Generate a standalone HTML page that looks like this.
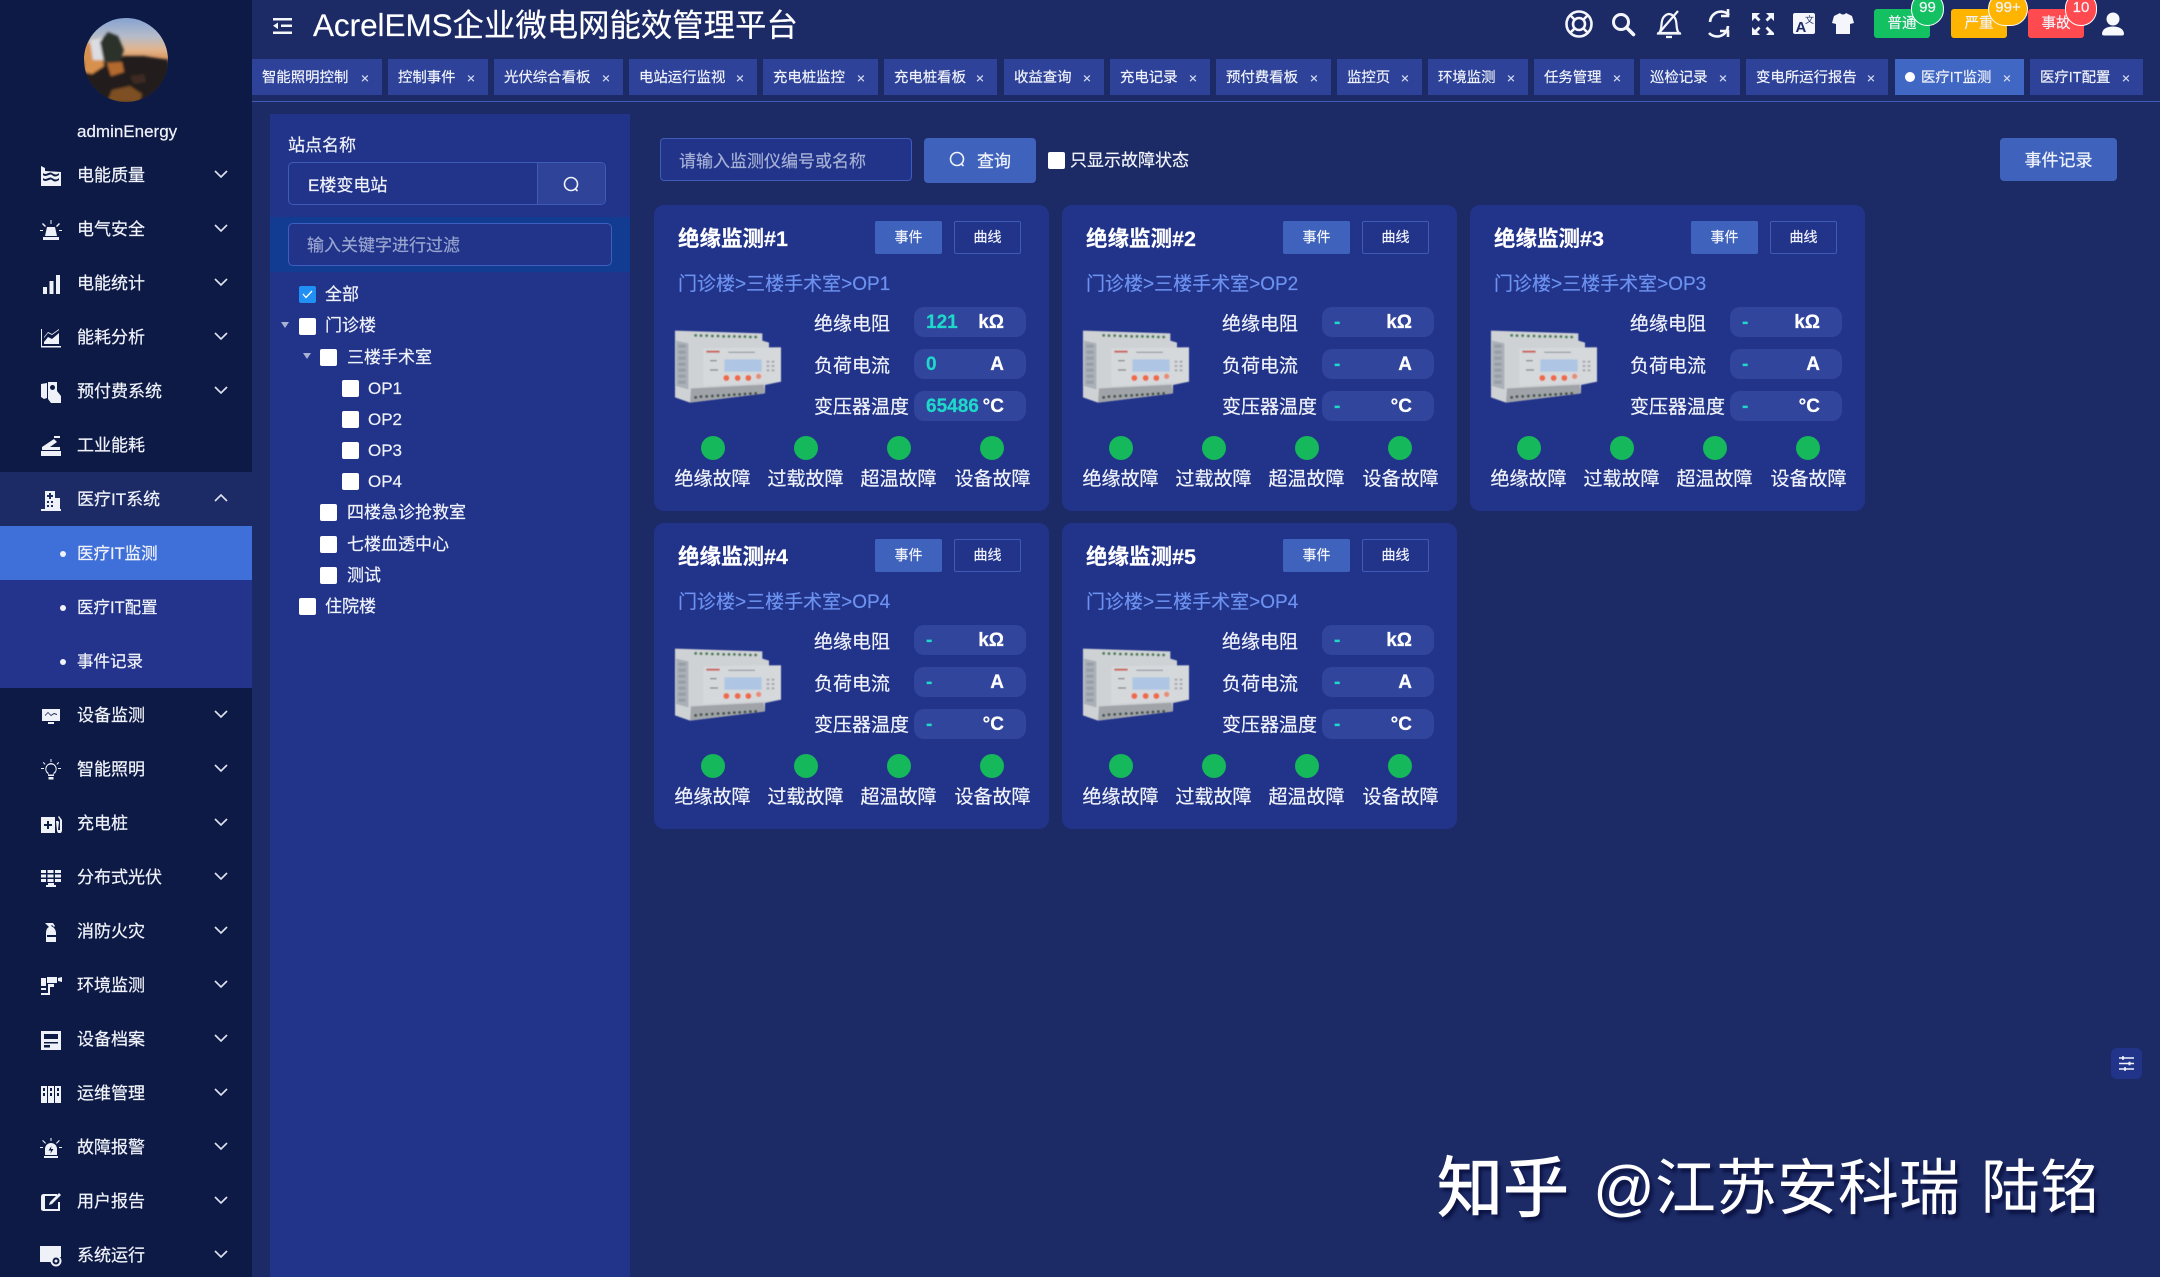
<!DOCTYPE html>
<html lang="zh"><head><meta charset="utf-8"><title>AcrelEMS</title>
<style>
*{box-sizing:border-box}
html,body{margin:0;padding:0;width:2160px;height:1277px;overflow:hidden}
body{position:relative;background:#1c2a66;color:#f0f3fa;font-family:"Liberation Sans","Noto Sans CJK SC",sans-serif;-webkit-text-stroke:.2px}
.a{position:absolute}
.t{position:absolute;line-height:26px;white-space:nowrap;margin-top:1px}
#side{left:0;top:0;width:252px;height:1277px;background:#0e1a46;overflow:hidden}
.row{position:absolute;left:0;width:252px;height:54px}
.row .l{position:absolute;left:77px;top:15px;line-height:26px;font-size:17px;white-space:nowrap}
.row svg.ic{position:absolute;left:40px;top:17px;width:22px;height:22px;fill:#eef1f7}
.row svg.ch{position:absolute;left:213px;top:21px;width:16px;height:10px;fill:none;stroke:#dfe4f0;stroke-width:1.6}
.sub .l{font-size:16.5px}
.sub::before{content:"";position:absolute;left:60px;top:25px;width:6px;height:6px;border-radius:50%;background:#f0f3fa}
.tab{position:absolute;top:59px;height:36px;background:#2e429a;font-size:14.4px;line-height:38px;padding-left:10px;white-space:nowrap}
.tab i{position:absolute;right:13px;top:0;font-style:normal;font-size:14px;color:#d5dbef}
.hb{position:absolute;top:9px;width:56px;height:29px;border-radius:3px;font-size:14.5px;line-height:30px;text-align:center}
.bd{position:absolute;top:-17px;height:34px;border-radius:17px;border:1px solid #fff;font-size:15px;line-height:30px;text-align:center}
.cb{position:absolute;width:17px;height:17px;background:#fff;border-radius:2px}
.tr{position:absolute;font-size:17px;line-height:26px;white-space:nowrap;margin-top:1px}
.ar{position:absolute;width:0;height:0;border-left:4.5px solid transparent;border-right:4.5px solid transparent;border-top:6px solid #a9b2d4}
.card{position:absolute;width:395px;height:306px;background:#22338a;border-radius:10px}
.card .tt{position:absolute;left:24px;top:21px;line-height:26px;font-size:21.5px;font-weight:700;white-space:nowrap;color:#fff}
.card .b1,.card .b2{position:absolute;top:16px;width:67px;height:33px;border-radius:2px;font-size:14px;line-height:32px;text-align:center}
.card .b1{left:221px;background:#3f63bd}
.card .b2{left:300px;border:1px solid #3f5bb5;line-height:31px}
.card .pa{position:absolute;left:24px;top:66px;line-height:27px;font-size:19px;color:#6c92f0;white-space:nowrap}
.card svg.dv{position:absolute;left:11px;top:105px;width:140px;height:110px}
.card .lb{position:absolute;left:160px;font-size:19px;line-height:26px;white-space:nowrap}
.card .pl{position:absolute;left:260px;width:112px;height:30px;background:#31459c;border-radius:10px;font-size:19px;font-weight:700;line-height:31px}
.pl b{position:absolute;left:12px;top:0;color:#1ed8c9}
.pl u{position:absolute;right:22px;top:0;text-decoration:none;color:#fff}
.card .d{position:absolute;top:231px;width:24px;height:24px;border-radius:50%;background:#15b85a}
.card .f{position:absolute;top:262px;width:93px;text-align:center;font-size:19px;line-height:26px;white-space:nowrap}
.wm{position:absolute;top:1148px;line-height:80px;white-space:nowrap;color:#fff;text-shadow:3px 4px 3px #0a1240;-webkit-text-stroke:0}
</style></head><body>
<svg width="0" height="0" style="position:absolute"><defs>
<filter id="bl" x="-5%" y="-5%" width="110%" height="110%"><feGaussianBlur stdDeviation="1.8"/></filter>
<filter id="bl2" x="-5%" y="-5%" width="110%" height="110%"><feGaussianBlur stdDeviation="1.4"/></filter>
<symbol id="dev" viewBox="0 0 420 330"><g filter="url(#bl)">
<polygon points="30,62 292,70 292,92 312,98 312,112 348,112 348,215 300,225 300,250 75,278 30,262" fill="#cfd2d4"/>
<polygon points="33,92 70,100 70,238 33,228" fill="#aab0b7"/>
<g fill="#8e969e" opacity=".7"><rect x="40" y="104" width="22" height="9"/><rect x="40" y="122" width="22" height="9"/><rect x="40" y="140" width="22" height="9"/><rect x="40" y="158" width="22" height="9"/><rect x="40" y="176" width="22" height="9"/><rect x="40" y="194" width="22" height="9"/><rect x="40" y="212" width="22" height="9"/></g>
<polygon points="115,115 348,112 348,215 115,228" fill="#d6d9dc"/>
<polygon points="78,235 296,224 300,250 75,278" fill="#a0a4a9"/>
<g fill="#4a7d58"><circle cx="92" cy="76" r="4.500"/><circle cx="108" cy="77" r="4.500"/><circle cx="125" cy="77" r="4.500"/><circle cx="142" cy="78" r="4.500"/><circle cx="159" cy="78" r="4.500"/><circle cx="176" cy="79" r="4.500"/><circle cx="192" cy="79" r="4.500"/><circle cx="208" cy="79" r="4.500"/><circle cx="224" cy="80" r="4.500"/><circle cx="240" cy="80" r="4.500"/><circle cx="256" cy="81" r="4.500"/><circle cx="272" cy="81" r="4.500"/></g>
<g fill="#46544e"><circle cx="92" cy="262" r="4.500"/><circle cx="108" cy="260" r="4.500"/><circle cx="125" cy="259" r="4.500"/><circle cx="142" cy="258" r="4.500"/><circle cx="159" cy="257" r="4.500"/><circle cx="176" cy="256" r="4.500"/><circle cx="192" cy="255" r="4.500"/><circle cx="208" cy="254" r="4.500"/><circle cx="224" cy="253" r="4.500"/><circle cx="240" cy="252" r="4.500"/><circle cx="256" cy="251" r="4.500"/><circle cx="272" cy="250" r="4.500"/></g>
<rect x="124" y="122" width="40" height="6" fill="#c8625c"/>
<rect x="178" y="148" width="112" height="37" fill="#aec6e4"/>
<rect x="190" y="125" width="80" height="4" fill="#9a9fa5"/>
<rect x="135" y="150" width="20" height="4" fill="#888"/><rect x="135" y="178" width="24" height="4" fill="#888"/>
<g fill="#a3a6a9"><rect x="305" y="152" width="8" height="6"/><rect x="320" y="152" width="8" height="6"/><rect x="305" y="165" width="8" height="6"/><rect x="320" y="165" width="8" height="6"/><rect x="305" y="178" width="8" height="6"/><rect x="320" y="178" width="8" height="6"/></g>
<g fill="#ee6a4a"><circle cx="184" cy="204" r="9"/><circle cx="218" cy="204" r="9"/><circle cx="250" cy="204" r="9"/></g><circle cx="281" cy="199" r="8" fill="#e88d7a"/>
</g></symbol>
</defs></svg>

<div id="side" class="a">
<svg class="a" style="left:84px;top:18px" width="84" height="84" viewBox="0 0 84 84"><defs><clipPath id="av"><circle cx="42" cy="42" r="42"/></clipPath><linearGradient id="sk" x1="0" y1="0" x2="0" y2="1"><stop offset="0" stop-color="#86a2d2"/><stop offset=".22" stop-color="#b6bcc9"/><stop offset=".38" stop-color="#e2b48c"/><stop offset=".47" stop-color="#d99a66"/><stop offset=".55" stop-color="#3c3230"/></linearGradient></defs>
<g clip-path="url(#av)"><rect width="84" height="84" fill="url(#sk)"/>
<g filter="url(#bl2)">
<path d="M26 44 L40 38 L60 38 L84 42 V84 H0 V50Z" fill="#211d1c"/>
<path d="M0 25 L16 26 L20 48 L8 56 L0 54Z" fill="#d8904e"/>
<path d="M6 22 L18 20 L20 42 L9 42Z" fill="#dcdde2"/>
<path d="M16 24 L24 14 L34 18 L40 32 L36 44 L20 44Z" fill="#2a322b"/>
<path d="M23 45 L38 44 L40 54 L27 58Z" fill="#b46a2e"/>
<path d="M23 84 L28 72 L46 68 L58 76 L56 84Z" fill="#7d4f24"/>
<path d="M46 58 L60 56 L62 64 L50 66Z" fill="#3d2c20"/>
</g></g></svg>
<div class="t" style="left:77px;top:118px;font-size:17px">adminEnergy</div>

<div class="row" style="top:148px"><svg class="ic" viewBox="0 0 22 22"><path d="M1 1l4 2v3l16 1v14H1z M3 8c3 3 6-2 9 0s5 2 7 0v2c-3 2-5 2-7 0s-6 3-9 0z M3 13c3 3 6-2 9 0s5 2 7 0v2c-3 2-5 2-7 0s-6 3-9 0z" fill-rule="evenodd"/></svg><span class="l">电能质量</span><svg class="ch" viewBox="0 0 16 10"><path d="M2 2l6 6 6-6"/></svg></div>
<div class="row" style="top:202px"><svg class="ic" viewBox="0 0 22 22"><path d="M7 8h8l2 9H5z M3 18h16v3H3z M10.500 1h1v4h-1z M3 4l3 3-1 1-3-3z M19 4l1 1-3 3-1-1z M0 11h3v1H0z M19 11h3v1h-3z"/></svg><span class="l">电气安全</span><svg class="ch" viewBox="0 0 16 10"><path d="M2 2l6 6 6-6"/></svg></div>
<div class="row" style="top:256px"><svg class="ic" viewBox="0 0 22 22"><path d="M3 14h4v7H3z M9.500 8h4v13h-4z M16 2h4v19h-4z"/></svg><span class="l">电能统计</span><svg class="ch" viewBox="0 0 16 10"><path d="M2 2l6 6 6-6"/></svg></div>
<div class="row" style="top:310px"><svg class="ic" viewBox="0 0 22 22"><path d="M1 2h1v17h19v1.500H1z M4 15l4-5 4 2 7-6v11H4z M4 10l4-5 4 2 7-5v1l-7 5-4-2-4 5z"/></svg><span class="l">能耗分析</span><svg class="ch" viewBox="0 0 16 10"><path d="M2 2l6 6 6-6"/></svg></div>
<div class="row" style="top:364px"><svg class="ic" viewBox="0 0 22 22"><path d="M1 3l6-1v15l-3 1-3-2z M8 1h9v9l4 5v7H11l-3-4z M12.500 4a2.500 2.500 0 100 5 2.500 2.500 0 000-5z" fill-rule="evenodd"/></svg><span class="l">预付费系统</span><svg class="ch" viewBox="0 0 16 10"><path d="M2 2l6 6 6-6"/></svg></div>
<div class="row" style="top:418px"><svg class="ic" viewBox="0 0 22 22"><path d="M2 12L14 4l3 3-7 5h10v3H2z M1 16h20v5H1z M14 1h6v2h-6z"/></svg><span class="l">工业能耗</span></div>
<div class="row" style="top:472px;background:#1c2a66"><svg class="ic" viewBox="0 0 22 22"><path d="M5 2h10v7h5v11h1v2H1v-2h4z M9 4v2H7v2h2v2h2V8h2V6h-2V4z M7 12v2h2v-2z M11 12v2h2v-2z M7 16v2h2v-2z M11 16v2h2v-2z" fill-rule="evenodd"/></svg><span class="l">医疗IT系统</span><svg class="ch" viewBox="0 0 16 10"><path d="M2 8l6-6 6 6"/></svg></div>
<div class="a" style="left:0;top:526px;width:252px;height:162px;background:#24348c"></div>
<div class="row sub" style="top:526px;background:#3f6fd8"><span class="l">医疗IT监测</span></div>
<div class="row sub" style="top:580px"><span class="l">医疗IT配置</span></div>
<div class="row sub" style="top:634px"><span class="l">事件记录</span></div>
<div class="row" style="top:688px"><svg class="ic" viewBox="0 0 22 22"><path d="M2 4h18v12H2z M5 11l3-3 3 3 3-2 3 1v-1l-3-1-3 2-3-3-3 3z M8 17h6v2H8z" fill-rule="evenodd"/></svg><span class="l">设备监测</span><svg class="ch" viewBox="0 0 16 10"><path d="M2 2l6 6 6-6"/></svg></div>
<div class="row" style="top:742px"><svg class="ic" viewBox="0 0 22 22"><path d="M11 4a6 6 0 00-3 11v2h6v-2a6 6 0 00-3-11zm0 1.500a4.500 4.500 0 012.500 8.300v1.700h-5v-1.700A4.500 4.500 0 0111 5.500z M8.500 18h5v2.500h-5z M10.500 0h1v3h-1z M1 9h3v1H1z M18 9h3v1h-3z M3.500 3l2 2-.7.7-2-2z M18.500 3l.7.7-2 2-.7-.7z"/></svg><span class="l">智能照明</span><svg class="ch" viewBox="0 0 16 10"><path d="M2 2l6 6 6-6"/></svg></div>
<div class="row" style="top:796px"><svg class="ic" viewBox="0 0 22 22"><path d="M1 4h14v16H1z M7 8v3H4v2h3v3h2v-3h3v-2H9V8z M16 8h2l1 1-1 8h2V7l-2-3 1-1 3 4v11l-1 2h-3l-1-2z" fill-rule="evenodd"/></svg><span class="l">充电桩</span><svg class="ch" viewBox="0 0 16 10"><path d="M2 2l6 6 6-6"/></svg></div>
<div class="row" style="top:850px"><svg class="ic" viewBox="0 0 22 22"><path d="M1 3h5v3H1z M7.500 3h6v3h-6z M15 3h6v3h-6z M1 7.500h5v3H1z M7.500 7.500h6v3h-6z M15 7.500h6v3h-6z M1 12h5v3H1z M7.500 12h6v3h-6z M15 12h6v3h-6z M8 16h6v2h2v2H6v-2h2z"/></svg><span class="l">分布式光伏</span><svg class="ch" viewBox="0 0 16 10"><path d="M2 2l6 6 6-6"/></svg></div>
<div class="row" style="top:904px"><svg class="ic" viewBox="0 0 22 22"><path d="M5 2h8l2 3-1 1-2-2-1 1c3 1 5 4 5 7v9H6v-9c0-3 1-5 3-6z M7 14h9v2H7z" fill-rule="evenodd"/></svg><span class="l">消防火灾</span><svg class="ch" viewBox="0 0 16 10"><path d="M2 2l6 6 6-6"/></svg></div>
<div class="row" style="top:958px"><svg class="ic" viewBox="0 0 22 22"><path d="M1 3h5v8H1z M7 2h10v6H7z M18 3l4-1v5l-4-1z M8 9h6v3H10v8H8z M1 13h5v2H1z M1 18h7v2H1z"/></svg><span class="l">环境监测</span><svg class="ch" viewBox="0 0 16 10"><path d="M2 2l6 6 6-6"/></svg></div>
<div class="row" style="top:1012px"><svg class="ic" viewBox="0 0 22 22"><path d="M1 2h20v19H1z M4 5v5h14V5z M4 13v1.500h14V13z M4 16v2.500h6V16z" fill-rule="evenodd"/></svg><span class="l">设备档案</span><svg class="ch" viewBox="0 0 16 10"><path d="M2 2l6 6 6-6"/></svg></div>
<div class="row" style="top:1066px"><svg class="ic" viewBox="0 0 22 22"><path d="M1 3h6v17H1z M8 3h6v17H8z M15 3h6v17h-6z M3 5v3h2V5z M3 10v3h2v-3z M10 5v3h2V5z M10 10v3h2v-3z M17 5v3h2V5z M17 10v3h2v-3z" fill-rule="evenodd"/></svg><span class="l">运维管理</span><svg class="ch" viewBox="0 0 16 10"><path d="M2 2l6 6 6-6"/></svg></div>
<div class="row" style="top:1120px"><svg class="ic" viewBox="0 0 22 22"><path d="M11 6a6 6 0 00-6 6v6h12v-6a6 6 0 00-6-6z M4 19h14v2H4z M10.500 1h1v3h-1z M3 3l3 3-.8.8-3-3z M19 3l.8.8-3 3L16 6z M0 10h3v1H0z M19 10h3v1h-3z"/><path d="M11.500 9l-3 4.500H11l-.5 3 3-4.500H11z" fill="#0e1a46"/></svg><span class="l">故障报警</span><svg class="ch" viewBox="0 0 16 10"><path d="M2 2l6 6 6-6"/></svg></div>
<div class="row" style="top:1174px"><svg class="ic" viewBox="0 0 22 22"><path d="M4 3h13v2H5v13h13v-7h2v9H4c-2 0-3-1-3-2V6c0-2 1-3 3-3z M19 2l2 2-9 9-3 1 1-3z"/></svg><span class="l">用户报告</span><svg class="ch" viewBox="0 0 16 10"><path d="M2 2l6 6 6-6"/></svg></div>
<div class="row" style="top:1228px;height:49px"><svg class="ic" viewBox="0 0 22 22"><path d="M0 1h21v11h-7l-2 5H0z"/><circle cx="16" cy="16" r="4.500" fill="none" stroke="#eef1f7" stroke-width="2"/><circle cx="16" cy="16" r="1.500"/></svg><span class="l">系统运行</span><svg class="ch" viewBox="0 0 16 10"><path d="M2 2l6 6 6-6"/></svg></div>
</div>

<svg class="a" style="left:272px;top:17px" width="21" height="18" viewBox="0 0 21 18" fill="#f4f6fb"><path d="M1 1h19v2.500H1z M9 7.500h11v2.500H9z M1 14.500h19V17H1z M1 8.800L6 5.500v6.600z"/></svg>
<div class="t" style="left:313px;top:10px;font-size:31.400px;line-height:30px;color:#fff">AcrelEMS企业微电网能效管理平台</div>

<svg class="a" style="left:1560px;top:0" width="300" height="50" viewBox="0 0 300 50" fill="none" stroke="#f4f6fb">
<g stroke-width="2.600"><circle cx="19" cy="24" r="12.500"/><circle cx="19" cy="24" r="6"/><path d="M10.500 15.500l4.500 4.500M27.500 15.500L23 20M10.500 32.500L15 28M27.500 32.500L23 28"/></g>
<circle cx="61" cy="22" r="7.500" stroke-width="3"/><path d="M66.500 27.500l7 7" stroke-width="3.600" stroke-linecap="round"/>
<path d="M99 33c3-3 2-8 3-12 1-5 5-7 7-7s6 2 7 7c1 4 0 9 3 12zM97 33.500h24" stroke-width="2.200"/><path d="M118 11L99 33M106 37h6" stroke-width="2.200"/>
<path d="M150 22a11 11 0 0 1 19-7M168 9v7h-7M168 26a11 11 0 0 1-19 7" stroke-width="2.600"/><path d="M161 28h8v6" stroke-width="2.600" transform="translate(-1 3)"/>
<g fill="#f4f6fb" stroke="none"><path d="M192 13h8l-3 3 3.500 3.500-2 2L195 18l-3 3z M214 13h-8l3 3-3.500 3.500 2 2L211 18l3 3z M192 35h8l-3-3 3.500-3.500-2-2L195 30l-3-3z M214 35h-8l3-3-3.500-3.500 2-2L211 30l3 3z"/>
<rect x="233" y="13" width="22" height="21" rx="2"/>
<path d="M274 16l6-3c1 2 5 2 6 0l6 3 2 7-4 1v10h-14V24l-4-1z"/></g>
<text x="235.500" y="32" font-size="15" font-weight="700" fill="#1c2a66" stroke="none" font-family="Liberation Sans">A</text>
<text x="245" y="23" font-size="9" fill="#1c2a66" stroke="none" font-family="Noto Sans CJK SC">文</text>
</svg>

<div class="hb" style="left:1874px;background:#14c162">普通<span class="bd" style="left:37px;width:33px;background:#14c162">99</span></div>
<div class="hb" style="left:1951px;background:#ffb400">严重<span class="bd" style="left:37px;width:40px;background:#ffb400">99+</span></div>
<div class="hb" style="left:2028px;background:#ff4a4f">事故<span class="bd" style="left:37px;width:32px;background:#ff4a4f">10</span></div>
<svg class="a" style="left:2101px;top:12px" width="24" height="24" viewBox="0 0 24 24" fill="#f6f8fc"><circle cx="12" cy="7" r="6.500"/><path d="M1 22c0-5 5-7.500 11-7.500S23 17 23 22c0 1-1 1.500-2 1.500H3c-1 0-2-.5-2-1.500z"/></svg>

<div class="tab" style="left:252px;width:130px">智能照明控制<i>×</i></div>
<div class="tab" style="left:388px;width:100px">控制事件<i>×</i></div>
<div class="tab" style="left:494px;width:129px">光伏综合看板<i>×</i></div>
<div class="tab" style="left:629px;width:128px">电站运行监视<i>×</i></div>
<div class="tab" style="left:763px;width:115px">充电桩监控<i>×</i></div>
<div class="tab" style="left:884px;width:113px">充电桩看板<i>×</i></div>
<div class="tab" style="left:1004px;width:100px">收益查询<i>×</i></div>
<div class="tab" style="left:1110px;width:100px">充电记录<i>×</i></div>
<div class="tab" style="left:1216px;width:115px">预付费看板<i>×</i></div>
<div class="tab" style="left:1337px;width:85px">监控页<i>×</i></div>
<div class="tab" style="left:1428px;width:100px">环境监测<i>×</i></div>
<div class="tab" style="left:1534px;width:100px">任务管理<i>×</i></div>
<div class="tab" style="left:1640px;width:100px">巡检记录<i>×</i></div>
<div class="tab" style="left:1746px;width:142px">变电所运行报告<i>×</i></div>
<div class="tab" style="left:1895px;width:129px;background:#4167c4;padding-left:26px"><span class="a" style="left:10px;top:13px;width:10px;height:10px;border-radius:50%;background:#fff"></span>医疗IT监测<i>×</i></div>
<div class="tab" style="left:2030px;width:113px">医疗IT配置<i>×</i></div>
<div class="a" style="left:252px;top:101px;width:1908px;height:1px;background:#3f5cb8"></div>

<div class="a" style="left:270px;top:114px;width:360px;height:1163px;background:#22338a"></div>
<div class="t" style="left:288px;top:132px;font-size:17px">站点名称</div>
<div class="a" style="left:288px;top:162px;width:318px;height:43px;border:1px solid #3f5cb8;border-radius:5px;overflow:hidden"><div class="a" style="left:248px;top:0;width:70px;height:43px;background:#2f4399;border-left:1px solid #3f5cb8"></div></div>
<div class="t" style="left:308px;top:172px;font-size:17px">E楼变电站</div>
<svg class="a" style="left:562px;top:175px" width="19" height="19" viewBox="0 0 19 19" fill="none" stroke="#f0f3fa" stroke-width="1.600"><circle cx="9" cy="9" r="6.500"/><path d="M13.500 14l2 2"/></svg>
<div class="a" style="left:270px;top:217px;width:360px;height:55px;background:#123c92"></div>
<div class="a" style="left:288px;top:223px;width:324px;height:43px;border:1px solid #3f5fc0;border-radius:5px;background:#22338a"></div>
<div class="t" style="left:307px;top:232px;font-size:17px;color:#98a5d0">输入关键字进行过滤</div>

<div class="cb" style="left:299px;top:286px;background:#2090f5"><svg class="a" style="left:3px;top:4px" width="11" height="9" viewBox="0 0 11 9" fill="none" stroke="#fff" stroke-width="1.300"><path d="M1 4l3 3.500L10 1"/></svg></div><div class="tr" style="left:325px;top:281px">全部</div>
<div class="ar" style="left:281px;top:322px"></div><div class="cb" style="left:299px;top:318px"></div><div class="tr" style="left:325px;top:312px">门诊楼</div>
<div class="ar" style="left:303px;top:353px"></div><div class="cb" style="left:320px;top:349px"></div><div class="tr" style="left:347px;top:344px">三楼手术室</div>
<div class="cb" style="left:342px;top:380px"></div><div class="tr" style="left:368px;top:375px">OP1</div>
<div class="cb" style="left:342px;top:411px"></div><div class="tr" style="left:368px;top:406px">OP2</div>
<div class="cb" style="left:342px;top:442px"></div><div class="tr" style="left:368px;top:437px">OP3</div>
<div class="cb" style="left:342px;top:473px"></div><div class="tr" style="left:368px;top:468px">OP4</div>
<div class="cb" style="left:320px;top:504px"></div><div class="tr" style="left:347px;top:499px">四楼急诊抢救室</div>
<div class="cb" style="left:320px;top:536px"></div><div class="tr" style="left:347px;top:531px">七楼血透中心</div>
<div class="cb" style="left:320px;top:567px"></div><div class="tr" style="left:347px;top:562px">测试</div>
<div class="cb" style="left:299px;top:598px"></div><div class="tr" style="left:325px;top:593px">住院楼</div>

<div class="a" style="left:660px;top:138px;width:252px;height:43px;background:#22338a;border:1px solid #3f5cb8;border-radius:4px"></div>
<div class="t" style="left:679px;top:148px;font-size:17px;color:#a5b0d6">请输入监测仪编号或名称</div>
<div class="a" style="left:924px;top:138px;width:112px;height:45px;background:#3f63bd;border-radius:4px"></div>
<svg class="a" style="left:948px;top:150px" width="19" height="19" viewBox="0 0 19 19" fill="none" stroke="#f0f3fa" stroke-width="1.600"><circle cx="9" cy="9" r="6.500"/><path d="M13.500 14l2 2"/></svg>
<div class="t" style="left:977px;top:148px;font-size:17px">查询</div>
<div class="cb" style="left:1048px;top:152px"></div>
<div class="t" style="left:1070px;top:147px;font-size:17px">只显示故障状态</div>
<div class="a" style="left:2000px;top:138px;width:117px;height:43px;background:#3f63bd;border-radius:4px;font-size:17px;line-height:45px;text-align:center">事件记录</div>

<div class="card" style="left:654px;top:205px">
<div class="tt">绝缘监测#1</div><div class="b1">事件</div><div class="b2">曲线</div><div class="pa">门诊楼&gt;三楼手术室&gt;OP1</div>
<svg class="dv" viewBox="0 0 420 330"><use href="#dev" width="420" height="330"/></svg>
<div class="lb" style="top:107px">绝缘电阻</div><div class="lb" style="top:149px">负荷电流</div><div class="lb" style="top:190px">变压器温度</div>
<div class="pl" style="top:102px"><b>121</b><u>kΩ</u></div><div class="pl" style="top:144px"><b>0</b><u>A</u></div><div class="pl" style="top:186px"><b>65486</b><u>°C</u></div>
<div class="d" style="left:47px"></div><div class="d" style="left:140px"></div><div class="d" style="left:233px"></div><div class="d" style="left:326px"></div>
<div class="f" style="left:12px">绝缘故障</div><div class="f" style="left:105px">过载故障</div><div class="f" style="left:198px">超温故障</div><div class="f" style="left:292px">设备故障</div>
</div>
<div class="card" style="left:1062px;top:205px">
<div class="tt">绝缘监测#2</div><div class="b1">事件</div><div class="b2">曲线</div><div class="pa">门诊楼&gt;三楼手术室&gt;OP2</div>
<svg class="dv" viewBox="0 0 420 330"><use href="#dev" width="420" height="330"/></svg>
<div class="lb" style="top:107px">绝缘电阻</div><div class="lb" style="top:149px">负荷电流</div><div class="lb" style="top:190px">变压器温度</div>
<div class="pl" style="top:102px"><b>-</b><u>kΩ</u></div><div class="pl" style="top:144px"><b>-</b><u>A</u></div><div class="pl" style="top:186px"><b>-</b><u>°C</u></div>
<div class="d" style="left:47px"></div><div class="d" style="left:140px"></div><div class="d" style="left:233px"></div><div class="d" style="left:326px"></div>
<div class="f" style="left:12px">绝缘故障</div><div class="f" style="left:105px">过载故障</div><div class="f" style="left:198px">超温故障</div><div class="f" style="left:292px">设备故障</div>
</div>
<div class="card" style="left:1470px;top:205px">
<div class="tt">绝缘监测#3</div><div class="b1">事件</div><div class="b2">曲线</div><div class="pa">门诊楼&gt;三楼手术室&gt;OP3</div>
<svg class="dv" viewBox="0 0 420 330"><use href="#dev" width="420" height="330"/></svg>
<div class="lb" style="top:107px">绝缘电阻</div><div class="lb" style="top:149px">负荷电流</div><div class="lb" style="top:190px">变压器温度</div>
<div class="pl" style="top:102px"><b>-</b><u>kΩ</u></div><div class="pl" style="top:144px"><b>-</b><u>A</u></div><div class="pl" style="top:186px"><b>-</b><u>°C</u></div>
<div class="d" style="left:47px"></div><div class="d" style="left:140px"></div><div class="d" style="left:233px"></div><div class="d" style="left:326px"></div>
<div class="f" style="left:12px">绝缘故障</div><div class="f" style="left:105px">过载故障</div><div class="f" style="left:198px">超温故障</div><div class="f" style="left:292px">设备故障</div>
</div>
<div class="card" style="left:654px;top:523px">
<div class="tt">绝缘监测#4</div><div class="b1">事件</div><div class="b2">曲线</div><div class="pa">门诊楼&gt;三楼手术室&gt;OP4</div>
<svg class="dv" viewBox="0 0 420 330"><use href="#dev" width="420" height="330"/></svg>
<div class="lb" style="top:107px">绝缘电阻</div><div class="lb" style="top:149px">负荷电流</div><div class="lb" style="top:190px">变压器温度</div>
<div class="pl" style="top:102px"><b>-</b><u>kΩ</u></div><div class="pl" style="top:144px"><b>-</b><u>A</u></div><div class="pl" style="top:186px"><b>-</b><u>°C</u></div>
<div class="d" style="left:47px"></div><div class="d" style="left:140px"></div><div class="d" style="left:233px"></div><div class="d" style="left:326px"></div>
<div class="f" style="left:12px">绝缘故障</div><div class="f" style="left:105px">过载故障</div><div class="f" style="left:198px">超温故障</div><div class="f" style="left:292px">设备故障</div>
</div>
<div class="card" style="left:1062px;top:523px">
<div class="tt">绝缘监测#5</div><div class="b1">事件</div><div class="b2">曲线</div><div class="pa">门诊楼&gt;三楼手术室&gt;OP4</div>
<svg class="dv" viewBox="0 0 420 330"><use href="#dev" width="420" height="330"/></svg>
<div class="lb" style="top:107px">绝缘电阻</div><div class="lb" style="top:149px">负荷电流</div><div class="lb" style="top:190px">变压器温度</div>
<div class="pl" style="top:102px"><b>-</b><u>kΩ</u></div><div class="pl" style="top:144px"><b>-</b><u>A</u></div><div class="pl" style="top:186px"><b>-</b><u>°C</u></div>
<div class="d" style="left:47px"></div><div class="d" style="left:140px"></div><div class="d" style="left:233px"></div><div class="d" style="left:326px"></div>
<div class="f" style="left:12px">绝缘故障</div><div class="f" style="left:105px">过载故障</div><div class="f" style="left:198px">超温故障</div><div class="f" style="left:292px">设备故障</div>
</div>

<div class="a" style="left:2111px;top:1048px;width:31px;height:31px;background:#22338a;border-radius:6px"></div>
<svg class="a" style="left:2118px;top:1055px" width="17" height="17" viewBox="0 0 17 17" stroke="#f0f3fa" stroke-width="1.500"><path d="M1 3h15M1 8.500h15M1 14h15"/><path d="M5 1.200v3.600M11.500 6.700v3.600M7 12.200v3.600" stroke-width="2"/></svg>

<div class="wm" style="left:1437px;font-size:66px;-webkit-text-stroke:1px #fff">知乎</div>
<div class="wm" style="left:1593px;font-size:61px">@江苏安科瑞</div>
<div class="wm" style="left:1981px;font-size:59px">陆铭</div>
</body></html>
